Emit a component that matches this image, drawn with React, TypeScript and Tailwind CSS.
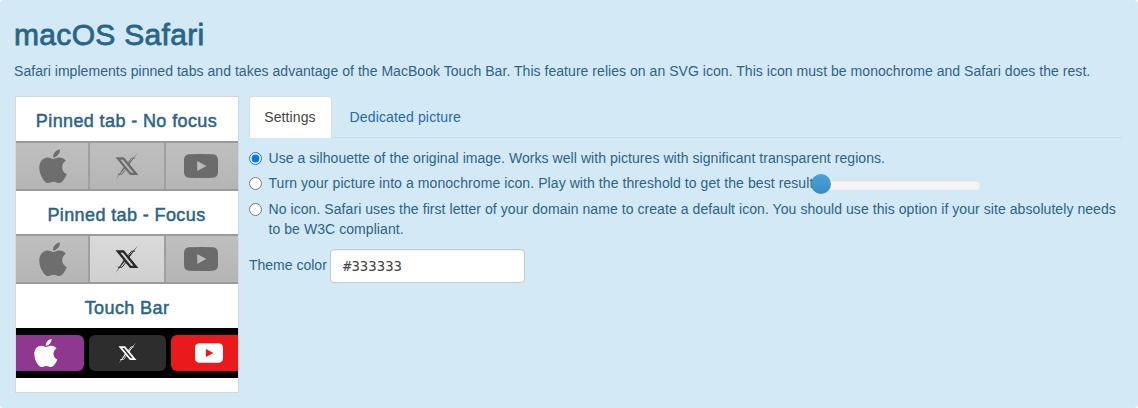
import { FaApple } from "react-icons/fa";

function XMark({ className }: { className: string }) {
  return (
    <svg viewBox="0 0 24 28" className={className} fill="none" stroke="currentColor">
      <path d="M2.9 6.5H8.4L21 21.9H15.6Z" strokeWidth="2.3" />
      <path d="M23.2 .2 13.2 14 12 12.6 17 7.2ZM.6 27.8 9 14.6 10.2 16 5.8 21.2Z" fill="currentColor" stroke="none" />
      <path d="M2.8 22.2H7L11 17.2" strokeWidth="1" />
      <path d="M19.8 6.2H16.6L13 10.6" strokeWidth="1" />
    </svg>
  );
}

function Play({ className }: { className: string }) {
  return (
    <svg viewBox="0 0 34 24" className={className}>
      <path
        fillRule="evenodd"
        fill="currentColor"
        d="M5 .3Q17-.2 29 .3C32.4 .6 34 2.5 34 6V18C34 21.5 32.4 23.4 29 23.7Q17 24.2 5 23.7C1.6 23.4 0 21.5 0 18V6C0 2.5 1.6 .6 5 .3ZM13.2 7V17L22.4 12Z"
      />
    </svg>
  );
}

function TabStrip({ focused }: { focused?: boolean }) {
  return (
    <div className="flex h-[50px] border-y-2 border-[#9b9b9b] bg-linear-to-b from-[#bfbfbf] to-[#b5b5b5] text-[#6e6e6e]">
      <div className="flex w-[72px] items-center justify-center pl-[1px]">
        <FaApple preserveAspectRatio="none" className="h-[38.5px] w-[28px]" />
      </div>
      <div
        className={
          focused
            ? "flex w-[78px] items-center justify-center border-x-2 border-[#9f9f9f] bg-linear-to-b from-[#dadada] to-[#d0d0d0] text-[#292929]"
            : "flex w-[78px] items-center justify-center border-x-2 border-[#9f9f9f]"
        }
      >
        <XMark className="h-[28px] w-[24px]" />
      </div>
      <div className="flex flex-1 items-center pl-[18px] text-[#6b6b6b]">
        <Play className="h-[24px] w-[34px]" />
      </div>
    </div>
  );
}

function Heading({ text }: { text: string }) {
  return (
    <h4 className="whitespace-nowrap text-center text-[18px] leading-5 tracking-[0.39px] [-webkit-text-stroke:0.5px_#286587]">
      {text}
    </h4>
  );
}

function Radio({ checked }: { checked?: boolean }) {
  return (
    <input
      type="radio"
      name="mode"
      defaultChecked={checked}
      className="mt-1 mr-[6.5px] h-[13px] w-[13px] shrink-0"
    />
  );
}

export default function App() {
  return (
    <div className="h-[408px] w-[1138px] overflow-hidden rounded-[4px] bg-[#d4e9f6] pl-[15px] font-['Liberation_Sans',Arial,sans-serif] text-[14px] leading-5 text-[#2b6486]">
      <h1 className="-ml-px h-[61px] pt-[18px] text-[30px] leading-[33px] tracking-[0.32px] [-webkit-text-stroke:0.8px_#286587]">macOS Safari</h1>
      <p className="-ml-px h-[35px] whitespace-nowrap tracking-[0.042px]">
        Safari implements pinned tabs and takes advantage of the MacBook Touch Bar. This feature relies on an SVG icon. This icon must be monochrome and Safari does the rest.
      </p>
      <div className="flex items-start">
        <section className="mr-[10px] h-[297px] w-[224px] border border-[#d7d7d7] bg-white">
          <div className="h-[44px] pt-[14px] pr-px"><Heading text="Pinned tab - No focus" /></div>
          <TabStrip />
          <div className="h-[43px] pt-[14px] pr-px"><Heading text="Pinned tab - Focus" /></div>
          <TabStrip focused />
          <div className="h-[44px] pt-[14px]"><Heading text="Touch Bar" /></div>
          <div className="flex h-[50px] gap-[5px] bg-black py-[7px] text-white">
            <div className="flex w-[68px] items-center rounded-r-[6px] bg-[#8e388f] pl-[18px]">
              <FaApple preserveAspectRatio="none" className="h-[32px] w-[23.5px]" />
            </div>
            <div className="flex w-[77px] items-center justify-center rounded-[6px] bg-[#2d2d2d]">
              <XMark className="h-[22px] w-[19px]" />
            </div>
            <div className="flex flex-1 items-center rounded-l-[6px] bg-[#ea1a1c] pl-[24px]">
              <Play className="h-[20px] w-[28px]" />
            </div>
          </div>
        </section>
        <section className="w-[874px]">
          <div className="flex h-[42px] border-b border-[#c8dfea]">
            <div className="-mb-px w-[83px] rounded-t-[4px] border border-b-0 border-[#d7dde0] bg-white pt-[10px] pr-px text-center tracking-[0.1px] text-[#444]">Settings</div>
            <div className="pt-[11px] pl-[17.5px] tracking-[0.15px] text-[#2269b0]">Dedicated picture</div>
          </div>
          <div className="mt-[10px] flex"><Radio checked /><span className="whitespace-nowrap tracking-[0.058px]">Use a silhouette of the original image. Works well with pictures with significant transparent regions.</span></div>
          <div className="mt-[5px] flex">
            <Radio />
            <span className="w-[543.5px] whitespace-nowrap tracking-[0.078px]">Turn your picture into a monochrome icon. Play with the threshold to get the best result.</span>
            <div className="relative mt-[7px] h-[10px] w-[168px] rounded-[4px] bg-[#f5f5f5] shadow-[inset_0_1px_2px_rgba(0,0,0,0.1)]">
              <div className="absolute -top-[6px] -left-px h-5 w-5 rounded-full bg-linear-to-b from-[#3a9ad9] to-[#2780be] opacity-90" />
            </div>
          </div>
          <div className="mt-[6px] flex"><Radio /><span className="whitespace-nowrap tracking-[0.066px]">No icon. Safari uses the first letter of your domain name to create a default icon. You should use this option if your site absolutely needs<br />to be W3C compliant.</span></div>
          <div className="mt-[10px] flex">
            <label className="w-[81px] pt-[6px] whitespace-nowrap">Theme color</label>
            <input
              defaultValue="#333333"
              className="h-[34px] w-[195px] rounded-[4px] border border-[#c8c8c8] bg-white px-3 font-['DejaVu_Sans_Mono',monospace] text-[14px] text-[#444] shadow-[inset_0_1px_1px_rgba(0,0,0,0.07)]"
            />
          </div>
        </section>
      </div>
    </div>
  );
}
